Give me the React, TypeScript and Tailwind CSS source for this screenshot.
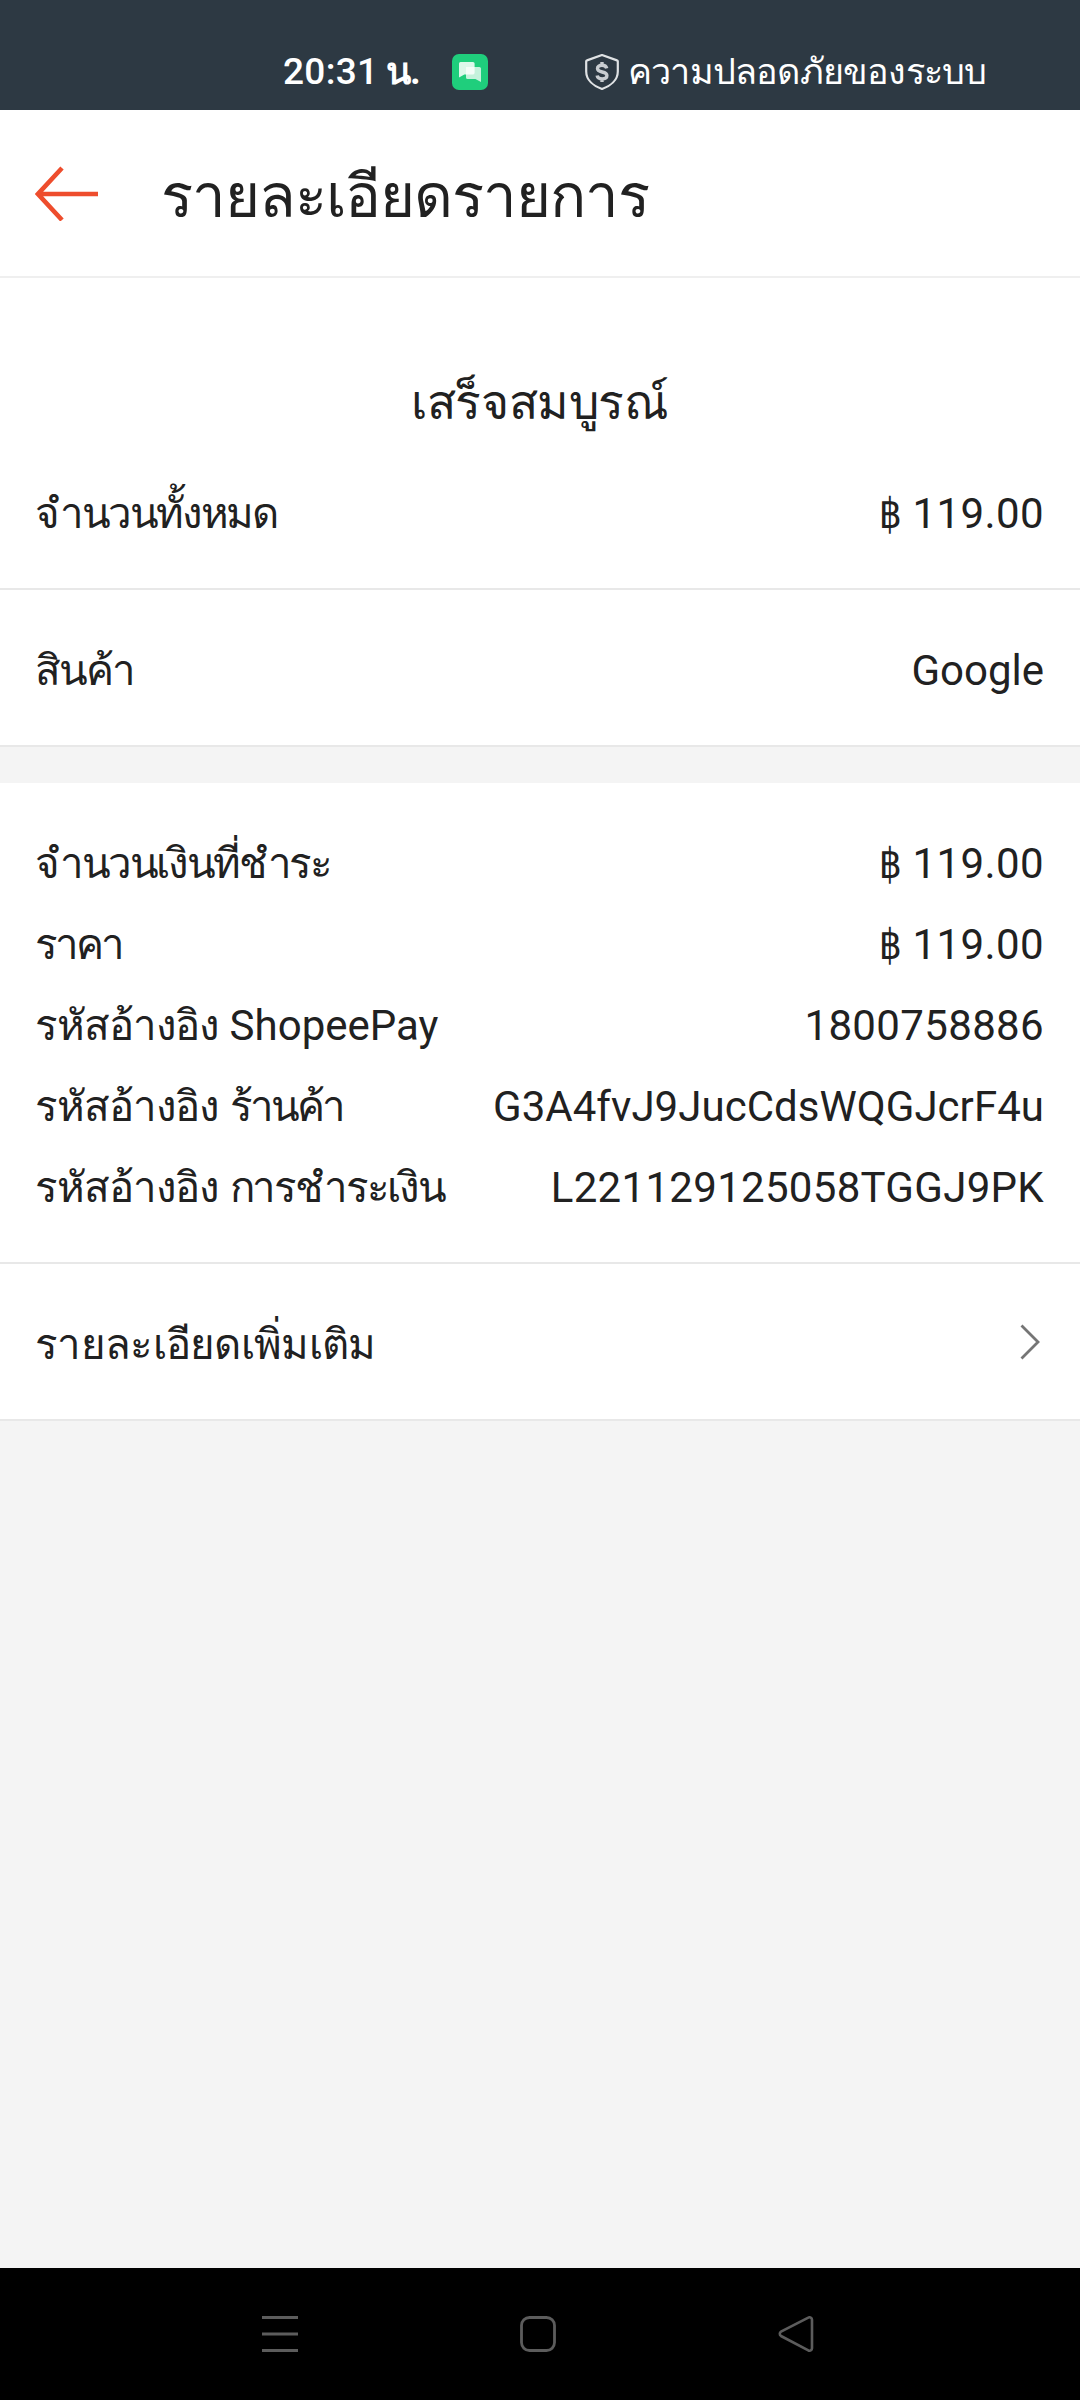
import React from "react"

/* ---------------- TYPES ---------------- */

type Row = {
  label: React.ReactNode
  value: React.ReactNode
}

/* ---------------- ICONS ---------------- */

function ChatBadge() {
  return (
    <svg width="36" height="36" viewBox="0 0 36 36">
      <rect width="36" height="36" rx="7" fill="#1fce7c" />
      <path
        d="M8.5 8H21a1.6 1.6 0 0 1 1.6 1.6v9.2a1.6 1.6 0 0 1-1.6 1.6h-8.6L7 23.4V9.6A1.6 1.6 0 0 1 8.5 8Z"
        fill="#dcf8ea"
      />
      <path
        d="M15.6 13h11.8a1.6 1.6 0 0 1 1.6 1.6V28l-5.6-3h-7.8a1.6 1.6 0 0 1-1.6-1.6v-8.800A1.6 1.6 0 0 1 15.6 13Z"
        fill="#c5f2dc"
      />
      <path d="M14 13h8.6v5.8a1.6 1.6 0 0 1-1.6 1.6h-7Z" fill="#f4fdf8" />
    </svg>
  )
}

function ShieldIcon() {
  return (
    <svg width="34" height="36" viewBox="0 0 34 36" fill="none">
      <path
        d="M17 1 32 6.4a1 1 0 0 1 .8 1V17.5C32.8 26 25.500 32 17 35 8.5 32 1.2 26 1.2 17.5V7.4a1 1 0 0 1 .8-1Z"
        stroke="#dfe2e4"
        strokeWidth="2.2"
        strokeLinejoin="round"
      />
      <path
        d="M21.7 14.3c-.5-2-2.300-3-4.700-3-2.700 0-4.500 1.200-4.500 3.200 0 4.800 9.400 2.200 9.400 7 0 2.200-2 3.400-4.800 3.400-2.700 0-4.600-1.200-5-3.400M17 8v3M17 25v3"
        stroke="#c9cdd1"
        strokeWidth="3.4"
      />
    </svg>
  )
}

function BackArrow() {
  return (
    <svg width="64" height="56" viewBox="0 0 64 56" fill="none">
      <path
        d="M27 3 3 29 27 55M2.5 29H63"
        stroke="#ee4d2d"
        strokeWidth="4.6"
      />
    </svg>
  )
}

function Chevron() {
  return (
    <svg width="20" height="36" viewBox="0 0 20 36" fill="none">
      <path d="M1.5 1.5 18 18 1.5 34.5" stroke="#757575" strokeWidth="2.8" />
    </svg>
  )
}

/* ---------------- DATA ---------------- */

const refLabel = <span className="tracking-[-1.1px]">รหัสอ้างอิง</span>

const price = (
  <span>
    <span className="inline-block origin-right scale-x-[0.85]">฿</span>
    <span className="tracking-[0.4px]"> 119.00</span>
  </span>
)

const rows: Row[] = [
  {
    label: <span className="tracking-[-2.4px]">จำนวนเงินที่ชำระ</span>,
    value: price
  },
  {
    label: <span className="tracking-[-2.9px]">ราคา</span>,
    value: price
  },
  {
    label: <span>{refLabel} ShopeePay</span>,
    value: <span className="tracking-[0.35px]">1800758886</span>
  },
  {
    label: (
      <span>
        {refLabel} <span className="tracking-[-2.9px]">ร้านค้า</span>
      </span>
    ),
    value: <span className="tracking-[0.04px]">G3A4fvJ9JucCdsWQGJcrF4u</span>
  },
  {
    label: (
      <span>
        {refLabel} <span className="tracking-[-2.2px]">การชำระเงิน</span>
      </span>
    ),
    value: <span className="tracking-[0.3px]">L221129125058TGGJ9PK</span>
  }
]

/* ---------------- BARS ---------------- */

function StatusBar() {
  return (
    <div className="flex h-[110px] items-end bg-[#2d3943] pb-5 pl-[283px] text-white">

      <div className="flex h-9 w-[169px] text-[37px] leading-9 font-medium">
        <span className="w-[91px] tracking-[0.3px]">20:31</span>
        <span className="ml-3 text-[37px] font-bold tracking-[-1px]">น.</span>
      </div>

      <ChatBadge />

      <div className="ml-[97px] flex h-9 items-center">
        <ShieldIcon />
        <span className="ml-[9px] text-[36px] leading-9 tracking-[-0.8px] whitespace-nowrap">
          ความปลอดภัยของระบบ
        </span>
      </div>

    </div>
  )
}

function NavBar() {
  return (
    <div className="flex h-[132px] items-center justify-between bg-black pr-[266px] pl-[262px]">

      <svg width="36" height="36" viewBox="0 0 36 36">
        <path d="M0 1.5h36M0 18h36M0 34.500h36" stroke="#5c5c5c" strokeWidth="3" />
      </svg>

      <svg width="36" height="36" viewBox="0 0 36 36" fill="none">
        <rect
          x="1.5"
          y="1.5"
          width="33"
          height="33"
          rx="8"
          stroke="#5c5c5c"
          strokeWidth="2.8"
        />
      </svg>

      <svg width="36" height="36" viewBox="0 0 36 36" fill="none">
        <path
          d="M30.3 1.7 3 15.6a2.6 2.6 0 0 0 0 4.4l27.300 14.300a2.4 2.4 0 0 0 3.700-2V3.7a2.4 2.4 0 0 0-3.700-2Z"
          stroke="#5c5c5c"
          strokeWidth="2.6"
        />
      </svg>

    </div>
  )
}

/* ---------------- PAGE ---------------- */

export default function App() {

  return (

    <div className="flex h-[2400px] w-[1080px] flex-col bg-[#f4f4f4] font-[Roboto,sans-serif] text-[42px] text-[#212121]">

      <StatusBar />

      {/* HEADER */}

      <header className="flex h-42 items-center border-b-2 border-[#efefef] bg-white pl-[35px]">
        <BackArrow />
        <h1 className="ml-[62px] pt-[7px] text-[60px] leading-20 tracking-[-1.1px]">
          รายละเอียดรายการ
        </h1>
      </header>

      {/* SUMMARY */}

      <section className="bg-white pt-[93px]">

        <h2 className="text-center text-[48px] leading-16 tracking-[-0.4px]">
          เสร็จสมบูรณ์
        </h2>

        <div className="flex h-[155px] items-center justify-between border-b-2 border-[#e8e8e8] pt-1 pr-9 pl-[35px]">
          <span className="tracking-[-2.4px]">จำนวนทั้งหมด</span>
          {price}
        </div>

        <div className="flex h-[157px] items-center justify-between border-b-2 border-[#e8e8e8] pt-1.5 pr-9 pl-[35px]">
          <span className="tracking-[-2px]">สินค้า</span>
          <span>Google</span>
        </div>

      </section>

      {/* PAYMENT DETAILS */}

      <section className="mt-9 bg-white">

        <div className="border-b-2 border-[#e8e8e8] pt-10 pr-9 pb-[34px] pl-[35px]">
          {rows.map((row, i) => (
            <div key={i} className="flex h-[81px] items-center justify-between whitespace-nowrap">
              {row.label}
              {row.value}
            </div>
          ))}
        </div>

        <div className="flex h-[157px] items-center justify-between border-b-2 border-[#e8e8e8] pr-10 pl-[35px]">
          <span className="pt-1.5 tracking-[-0.7px]">รายละเอียดเพิ่มเติม</span>
          <Chevron />
        </div>

      </section>

      <div className="grow" />

      <NavBar />

    </div>

  )

}
